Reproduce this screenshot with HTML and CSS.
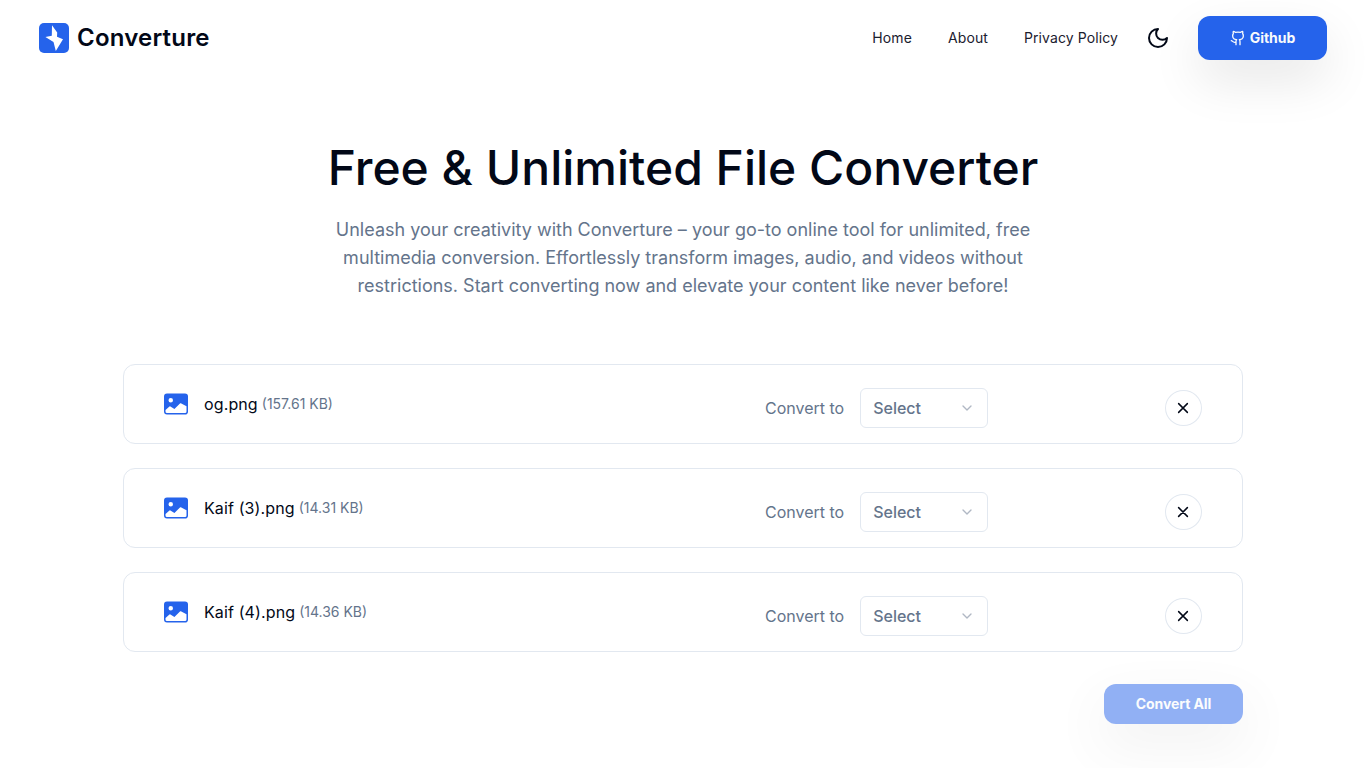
FILE: index.html
```html
<!DOCTYPE html>
<html lang="en">
<head>
<meta charset="utf-8">
<title>Converture</title>
<link rel="stylesheet" href="styles.css">
</head>
<body>
<svg class="sprite" aria-hidden="true">
  <symbol id="image" viewBox="0 0 16 16"><path fill="currentColor" d="M.002 3a2 2 0 0 1 2-2h12a2 2 0 0 1 2 2v10a2 2 0 0 1-2 2h-12a2 2 0 0 1-2-2V3zm1 9v1a1 1 0 0 0 1 1h12a1 1 0 0 0 1-1V9.500l-3.777-1.947a.5.5 0 0 0-.577.093l-3.710 3.710-2.660-1.772a.5.5 0 0 0-.630.062L1.002 12zm5-6.500a1.500 1.500 0 1 0-3 0 1.500 1.500 0 0 0 3 0z"/></symbol>
  <symbol id="chevron" viewBox="0 0 24 24"><path fill="none" stroke="currentColor" stroke-width="2" stroke-linecap="round" stroke-linejoin="round" d="m6 9 6 6 6-6"/></symbol>
  <symbol id="close" viewBox="0 0 512 512"><path fill="none" stroke="currentColor" stroke-width="38" stroke-linecap="round" d="M368 368 144 144M368 144 144 368"/></symbol>
</svg>
<header class="nav">
  <a class="brand">
    <svg class="brand-mark" viewBox="0 0 30 30"><rect width="30" height="30" rx="5" fill="#2563eb"/><path fill="#fff" d="M13 2.300 18.200 9.500 18 13.800 24 16.200 16.800 28 14.500 19 6.400 14 12.800 12.800z"/></svg>
    <span>Converture</span>
  </a>
  <nav class="links"><a>Home</a><a>About</a><a>Privacy Policy</a></nav>
  <svg class="moon" viewBox="0 0 24 24"><path fill="none" stroke="currentColor" stroke-width="2" stroke-linecap="round" stroke-linejoin="round" d="M12 3a6 6 0 0 0 9 9 9 9 0 1 1-9-9Z"/></svg>
  <a class="button github">
    <svg class="github-icon" viewBox="0 0 24 24"><path fill="none" stroke="currentColor" stroke-width="2" stroke-linecap="round" stroke-linejoin="round" d="M15 22v-4a4.800 4.800 0 0 0-1-3.500c3 0 6-2 6-5.500.080-1.250-.270-2.480-1-3.500.280-1.150.280-2.350 0-3.500 0 0-1 0-3 1.500-2.640-.500-5.360-.500-8 0C6 2 5 2 5 2c-.300 1.150-.300 2.350 0 3.500A5.403 5.403 0 0 0 4 9c0 3.500 3 5.500 6 5.500-.390.490-.680 1.050-.850 1.650-.170.600-.220 1.230-.150 1.850v4M9 18c-4.510 2-5-2-7-2"/></svg>
    <span>Github</span>
  </a>
</header>
<main class="page">
  <h1 class="title">Free &amp; Unlimited File Converter</h1>
  <p class="intro">Unleash your creativity with Converture – your go-to online tool for unlimited, free<br>multimedia conversion. Effortlessly transform images, audio, and videos without<br>restrictions. Start converting now and elevate your content like never before!</p>
  <section class="files">
    <div class="file"><div class="file-info"><svg class="file-icon"><use href="#image"/></svg><span class="name">og.png</span><span class="size">(157.61 KB)</span></div><div class="convert"><span>Convert to</span><button class="select">Select<svg class="chevron"><use href="#chevron"/></svg></button></div><button class="remove"><svg class="close"><use href="#close"/></svg></button></div>
    <div class="file"><div class="file-info"><svg class="file-icon"><use href="#image"/></svg><span class="name">Kaif (3).png</span><span class="size">(14.31 KB)</span></div><div class="convert"><span>Convert to</span><button class="select">Select<svg class="chevron"><use href="#chevron"/></svg></button></div><button class="remove"><svg class="close"><use href="#close"/></svg></button></div>
    <div class="file"><div class="file-info"><svg class="file-icon"><use href="#image"/></svg><span class="name">Kaif (4).png</span><span class="size">(14.36 KB)</span></div><div class="convert"><span>Convert to</span><button class="select">Select<svg class="chevron"><use href="#chevron"/></svg></button></div><button class="remove"><svg class="close"><use href="#close"/></svg></button></div>
  </section>
  <div class="actions"><button class="button convert-all">Convert All</button></div>
</main>
</body>
</html>
```
FILE: styles.css
```css
* { box-sizing: border-box; }
body { margin: 0; height: 768px; overflow: hidden; background: #fff; color: #020817; font: 16px/24px Inter, sans-serif; }
button { font: inherit; }
.sprite { display: none; }
.nav { display: flex; align-items: center; height: 76px; padding: 0 39px; }
.brand { display: flex; align-items: center; gap: 8px; margin-right: auto; font-size: 24px; line-height: 32px; font-weight: 600; letter-spacing: .2px; }
.brand-mark { width: 30px; height: 30px; }
.links { display: flex; gap: 36px; margin-right: 28px; color: #1b202e; font-size: 14px; line-height: 20px; letter-spacing: .1px; }
.moon { width: 24px; height: 24px; margin-right: 28px; }
.button { display: flex; align-items: center; justify-content: center; border: 0; border-radius: 12px; background: #2563eb; color: #f8fafc; font-size: 14px; line-height: 20px; font-weight: 700; box-shadow: 0 20px 50px rgba(0, 0, 0, .1); }
.github { width: 129px; height: 44px; gap: 4px; letter-spacing: -.05px; }
.github-icon { width: 16px; height: 16px; }
.page { width: 1120px; margin: 0 auto; }
.title { margin: 64px 0 0; font-size: 48px; line-height: 56px; font-weight: 500; text-align: center; }
.intro { margin: 20px 0 64px; color: #64748b; font-size: 18px; line-height: 28px; text-align: center; }
.files { display: flex; flex-direction: column; gap: 24px; }
.file { display: grid; grid-template-columns: 601px 1fr 37px; height: 80px; padding: 0 40px; border: 1px solid #e2e8f0; border-radius: 12px; }
.file-info { display: flex; align-items: center; height: 78px; }
.file-icon { width: 24px; height: 24px; margin-right: 16px; color: #2563eb; }
.name { margin-right: 4px; font-weight: 400; letter-spacing: .12px; }
.size { color: #64748b; font-size: 14px; }
.convert { display: flex; align-items: center; gap: 16px; height: 40px; margin-top: 23px; color: #64748b; }
.select { display: flex; align-items: center; justify-content: space-between; width: 128px; height: 40px; padding: 0 12px; border: 1px solid #e2e8f0; border-radius: 6px; background: #fff; color: #64748b; font-weight: 500; }
.chevron { width: 16px; height: 16px; opacity: .5; }
.remove { display: flex; align-items: center; justify-content: center; width: 37px; height: 36px; margin-top: 25px; padding: 0 1px 0 0; border: 1px solid #e2e8f0; border-radius: 50%; background: #fff; color: #020817; }
.close { width: 20px; height: 20px; }
.actions { display: flex; justify-content: flex-end; margin-top: 32px; }
.convert-all { width: 139px; height: 40px; opacity: .5; letter-spacing: -.1px; }
```
